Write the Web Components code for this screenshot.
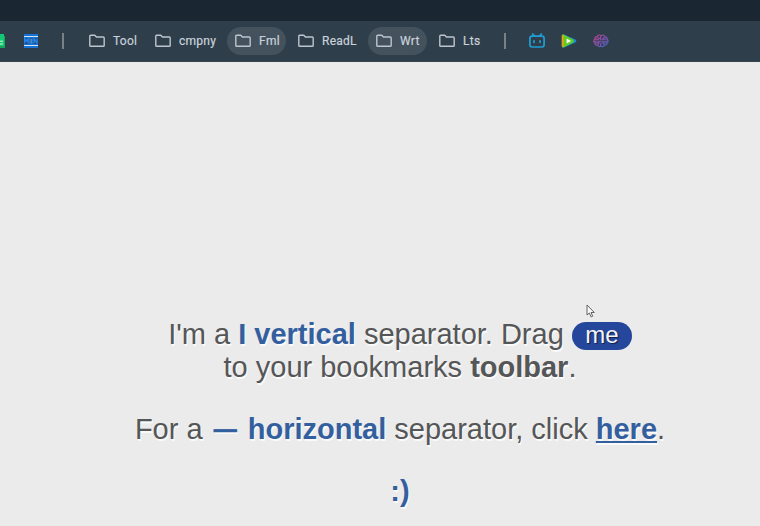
<!DOCTYPE html>
<html lang="en"><head><meta charset="utf-8"><title>Separator</title>
<style>html,body{margin:0;height:100%;overflow:hidden}</style></head>
<body><separator-page></separator-page>
<script>
const define=(name,html)=>customElements.define(name,class extends HTMLElement{
  constructor(){super();this.attachShadow({mode:'open'}).innerHTML=html;}
});
define('folder-item',`<style>
:host{display:flex;align-items:center;box-sizing:border-box;height:28px;padding-left:8px;gap:8px;border-radius:14px;color:#c9d1db;font:400 12px/28px Roboto,sans-serif;letter-spacing:.25px;-webkit-text-stroke:.2px #c9d1db;white-space:nowrap;flex:none}
:host([active]){background:#44525e}
svg{flex:none}
</style><svg width="16" height="14" viewBox="0 0 16 14" fill="none" stroke="#bdc5ce" stroke-width="1.4" stroke-linejoin="round"><path d="M.8 2.2Q.8 1.3 1.7 1.3H5.8L7.4 3H14.3Q15.2 3 15.2 3.9V11.4Q15.2 12.3 14.3 12.3H1.7Q.8 12.3 .8 11.4Z"/></svg><span><slot></slot></span>`);
define('bar-divider',`<style>:host{display:block;width:2px;height:16px;background:#7b8085;flex:none}</style>`);
define('bookmark-bar',`<style>
:host{display:flex;align-items:center;box-sizing:border-box;height:41px;background:#2e3e4a;border-bottom:1px solid #35444f;flex:none}
svg{display:block;flex:none}
.folders{display:flex;gap:4px;margin:0 23px 0 17px}
.sites{display:flex;gap:16px;margin-left:23px}
.month{margin:0 24px 0 18px}
</style>
<svg width="6" height="16" viewBox="0 0 6 16"><path d="M0 1H4V3H5V15H0Z" fill="#10a75b"/><path d="M0 1H4V13H0Z" fill="#12c873"/><path d="M0 8.2H3M0 11H3" stroke="#d4f3dc"/></svg>
<svg class="month" width="14" height="14" viewBox="0 0 14 14"><path fill="#1672d4" d="M0 0H14V14H0Z"/><path d="M0 2.5H14M0 11.5H14" stroke="#d8e6f4"/><path d="M0 4H14V10H0Z" fill="#204e83"/><path d="M.7 9.5V4.5L2.5 7 4.2 4.5V9.5M6 4.5V9H8V4.5M10 9.5V4.5L13 9V4.5" fill="none" stroke="#2188f1" stroke-width="1.3"/><path d="M7 6H8M7 8H8" stroke="#a5a17b"/></svg>
<bar-divider></bar-divider>
<div class="folders">
<folder-item style="width:62px">Tool</folder-item><folder-item style="width:76px">cmpny</folder-item><folder-item active style="width:59px">Fml</folder-item><folder-item style="width:74px">ReadL</folder-item><folder-item active style="width:59px">Wrt</folder-item><folder-item style="width:50px">Lts</folder-item>
</div><bar-divider></bar-divider>
<div class="sites">
<svg width="16" height="16" viewBox="0 0 16 16" fill="none" stroke="#209ed5" stroke-width="1.7" stroke-linecap="round"><rect x=".9" y="3.2" width="14.2" height="10.8" rx="2.2"/><path d="M3.6 1L5.7 3.2M12.4 1L10.3 3.2M5 7.8V9.3M11 7.8V9.3"/></svg>
<svg width="16" height="16" viewBox="0 0 16 16"><path d="M1 3Q1 .6 3.2 1.5L14.3 6.5Q16.4 8 14.3 9.5L3.2 14.5Q1 15.4 1 13Z" fill="#168ed6"/><path d="M.8 3Q.8 1.4 2.5 1.6L12 6.6Q13.8 8 12 9.4L2.5 14.4Q.8 14.6.8 13Z" fill="#61cc21"/><path d="M.8 2.2L2.6 2.1V13.9L.8 13.8Z" fill="#eba11c"/><path d="M5.6 5.4L10 8 5.6 10.6Z" fill="#fff"/></svg>
<svg width="16" height="16" viewBox="0 0 16 16" fill="none" stroke-width="1.25"><defs><linearGradient id="g" x2="1" y2="1"><stop stop-color="#b8418b"/><stop offset=".5" stop-color="#8451ad"/><stop offset="1" stop-color="#4166bb"/></linearGradient></defs><g stroke="url(#g)" transform="translate(0 1) scale(1 .88)"><path d="M7.3 1.5Q4.7.5 4 3 1.8 3 2 5.5-.4 7.9 2 10.3 2 13 4.7 13 6 15 8 14 10.5 15 11.6 12.8 14.2 12.8 14 10.2 16.2 8 14 5.5 14 3 11.8 3 11 .5 8.2 1.7Z"/><path d="M7.7 1.5V6L4 3M11.7 3L9.6 6 14 5.6M2 5.5L6 6.4M1 8.2H15M2 10.4L6 9.8 4.8 13M7.7 14V10M14 10.3L9.8 9.8 11.6 13"/></g></svg>
</div>`);
define('drag-pill',`<style>:host{display:inline-block;box-sizing:border-box;width:60px;height:28px;border-radius:14px;background:#25479b;color:#f4f5f8;text-align:center;font-size:24px;line-height:26px;vertical-align:1px;text-shadow:1px 1px 1px #101d46}</style><slot></slot>`);
define('blue-text',`<style>:host{color:#345f9f;font-weight:700}</style><slot></slot>`);
define('separator-message',`<style>
:host{display:block;color:#555657;font:29px/33px "Liberation Sans",Arial,sans-serif;text-align:center;text-shadow:1px 2px 0 #fafafa}
p{margin:0 0 29px;white-space:nowrap}
a{color:inherit;text-decoration:underline;text-decoration-thickness:2px;text-underline-offset:2px;text-decoration-skip-ink:none}
.dash{font-size:23px;margin:0 3px;line-height:0;vertical-align:2px;-webkit-text-stroke:.6px #345f9f}
</style>
<p><span>I'm a <blue-text>I vertical</blue-text> separator. Drag <drag-pill>me</drag-pill></span><br><span>to your bookmarks <b>toolbar</b>.</span></p>
<p>For a <blue-text><span class="dash">—</span> horizontal</blue-text> separator, click <blue-text><a>here</a></blue-text>.</p>
<p><blue-text>:)</blue-text></p>`);
define('separator-page',`<style>
:host{display:flex;flex-direction:column;height:526px;width:760px;background:#ebebeb;position:relative;overflow:hidden}
header{height:21px;background:#1a2733;flex:none}
main{padding:256px 0 0 40px;width:720px}
.cursor{position:absolute;left:586px;top:304px}
</style><header></header><bookmark-bar></bookmark-bar><main><separator-message></separator-message></main>
<svg class="cursor" width="10" height="15" viewBox="0 0 10 15"><path d="M1 1V11L3.3 9 5.2 13 6.7 12.2 5 8.5H8.3Z" fill="#f8f8f8" stroke="#555" stroke-width=".9"/></svg>`);
</script></body></html>
